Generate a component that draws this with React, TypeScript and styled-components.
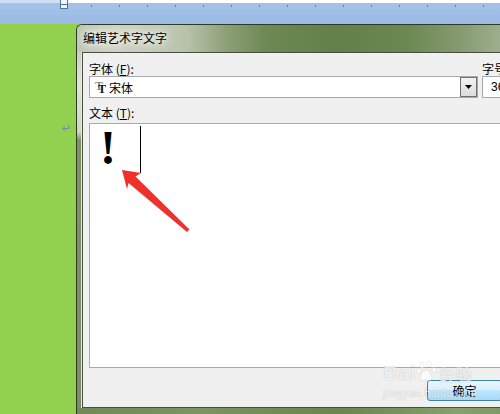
import styled, { createGlobalStyle } from "styled-components";

const GlobalStyle = createGlobalStyle`
  html, body {
    margin: 0;
    padding: 0;
    background: #92d050;
  }
  body {
    font-family: "Noto Sans CJK SC", "Liberation Sans", sans-serif;
    font-size: 12px;
    color: #000;
  }
`;

export default function App() {
  return (
    <Screen>
      <GlobalStyle />
      <Ruler>
        <RulerLeft />
        <IndentMarker />
        <RulerRight />
      </Ruler>
      <RibbonBand />
      <Workspace>
        <PageMargin>
          <ReturnMark>↵</ReturnMark>
        </PageMargin>
        <Dialog>
          <TitleBar>
            <Title>编辑艺术字文字</Title>
          </TitleBar>
          <DialogBody>
            <SideFrame />
            <Content>
              <FieldRow>
                <FieldGroup $width={389}>
                  <Label>
                    字体 (<u>F</u>):
                  </Label>
                  <Combo>
                    <ComboValue>
                      <TrueTypeIcon>
                        <IconBackT>T</IconBackT>
                        <IconFrontT>T</IconFrontT>
                      </TrueTypeIcon>
                      <span>宋体</span>
                    </ComboValue>
                    <DropButton>
                      <svg width="7" height="4" viewBox="0 0 7 4">
                        <path d="M0 0h7L3.5 4z" fill="#000" />
                      </svg>
                    </DropButton>
                  </Combo>
                </FieldGroup>
                <FieldGroup $width={100}>
                  <Label>
                    字号 (<u>S</u>):
                  </Label>
                  <SizeBox>36</SizeBox>
                </FieldGroup>
              </FieldRow>
              <TextLabel>
                文本 (<u>T</u>):
              </TextLabel>
              <TextArea>
                <TextLine>
                  <BigGlyph>!</BigGlyph>
                  <Caret />
                </TextLine>
              </TextArea>
              <Footer>
                <DialogButton $primary>确定</DialogButton>
                <DialogButton>取消</DialogButton>
              </Footer>
            </Content>
          </DialogBody>
          <BottomFrame />
        </Dialog>
      </Workspace>

      <Watermark>
        <WatermarkBrand>
          Bai
          <svg width="22" height="22" viewBox="0 0 22 22">
            <g fill="rgba(255,255,255,0.75)" stroke="rgba(0,0,0,0.12)" strokeWidth="0.6">
              <ellipse cx="6" cy="5" rx="2.3" ry="3" />
              <ellipse cx="13" cy="4" rx="2.3" ry="3" />
              <ellipse cx="2.8" cy="11" rx="2.1" ry="2.7" />
              <ellipse cx="18" cy="10" rx="2.1" ry="2.7" />
              <path d="M10 10c-3 0-6 5-6 8s3 3 6 2c3 1 6 1 6-2s-3-8-6-8z" />
            </g>
          </svg>
          <WatermarkCn>经验</WatermarkCn>
        </WatermarkBrand>
        <WatermarkUrl>jingyan.baidu.com</WatermarkUrl>
      </Watermark>

      <ArrowOverlay width="500" height="414" viewBox="0 0 500 414">
        <polygon
          points="122,170 141,173 135.5,176.5 189.5,229.5 187,232 128.5,183 127,189"
          fill="#f0302a"
        />
      </ArrowOverlay>
    </Screen>
  );
}

const Screen = styled.div`
  position: relative;
  width: 500px;
  height: 414px;
  overflow: hidden;
  background: #92d050;
  display: flex;
  flex-direction: column;
`;

const Ruler = styled.div`
  height: 9px;
  display: flex;
  flex-shrink: 0;
  background: #a4c1e7;
`;

const RulerLeft = styled.div`
  width: 60px;
  background: linear-gradient(#cfdff3 0 3px, #a4c1e7 3px);
`;

const IndentMarker = styled.div`
  width: 8px;
  box-sizing: border-box;
  border: 1px solid #4f74a8;
  border-top: none;
  background: linear-gradient(#f4f7fb 0 4px, #4f74a8 4px 5px, #f4f7fb 5px);
`;

const RulerRight = styled.div`
  flex: 1;
  background:
    linear-gradient(#ffffff 0 3px, transparent 3px),
    repeating-linear-gradient(
      90deg,
      transparent 0 23px,
      #6e7f96 23px 24px,
      transparent 24px 28px
    ) 0 5px / 100% 2px no-repeat,
    #a4c1e7;
`;

const RibbonBand = styled.div`
  height: 15px;
  flex-shrink: 0;
  background: linear-gradient(#a0bfe7, #9cbce5);
`;

const Workspace = styled.div`
  flex: 1;
  display: flex;
  min-height: 0;
`;

const PageMargin = styled.div`
  width: 76px;
  flex-shrink: 0;
  background: #92d050;
  box-sizing: border-box;
  padding: 99px 0 0 62px;
`;

const ReturnMark = styled.div`
  font-family: "DejaVu Sans", sans-serif;
  font-size: 11px;
  line-height: 12px;
  color: #7a8a9c;
`;

const Dialog = styled.div`
  flex-shrink: 0;
  width: 540px;
  display: flex;
  flex-direction: column;
  border-top: 1px solid #2e3a26;
  border-left: 1px solid #2e3a26;
  border-top-left-radius: 6px;
  overflow: hidden;
`;

const TitleBar = styled.div`
  height: 27px;
  flex-shrink: 0;
  display: flex;
  align-items: center;
  padding: 0 0 2px 6px;
  box-sizing: border-box;
  background: linear-gradient(
    90deg,
    #bcc6b0 0px,
    #cdd3c4 40px,
    #b8c2aa 110px,
    #8c9f76 150px,
    #6d8853 190px,
    #63804a 260px,
    #6c8852 330px,
    #84996f 380px,
    #9daf8d 424px,
    #a4b495 540px
  );
`;

const Title = styled.div`
  font-size: 12px;
  line-height: 14px;
  color: #000;
  text-shadow: 0 0 6px #fff, 0 0 10px rgba(255, 255, 255, 0.9),
    0 0 14px rgba(255, 255, 255, 0.7);
`;

const DialogBody = styled.div`
  display: flex;
  flex-shrink: 0;
`;

const SideFrame = styled.div`
  width: 5px;
  flex-shrink: 0;
  border-right: 1px solid #e6eadf;
  box-sizing: border-box;
  background: linear-gradient(
    #c6d0bc 0px,
    #dfe5d8 30px,
    #cdd6c2 80px,
    #7d9262 88px,
    #7b8c68 356px
  );
`;

const Content = styled.div`
  width: 511px;
  height: 356px;
  box-sizing: border-box;
  border: 1px solid #4a4f46;
  border-right: none;
  background: #f0f0f0;
  padding: 9px 0 0 6px;
  display: flex;
  flex-direction: column;
`;

const FieldRow = styled.div`
  display: flex;
  gap: 4px;
`;

const FieldGroup = styled.div<{ $width: number }>`
  width: ${(p) => p.$width}px;
  display: flex;
  flex-direction: column;
`;

const Label = styled.div`
  height: 14px;
  line-height: 14px;
  font-size: 12px;
  white-space: nowrap;
`;

const Combo = styled.div`
  height: 22px;
  box-sizing: border-box;
  border: 1px solid #a7a9ad;
  background: #fff;
  display: flex;
  align-items: stretch;
`;

const ComboValue = styled.div`
  flex: 1;
  display: flex;
  align-items: center;
  gap: 2px;
  padding-left: 5px;
  font-size: 12px;
`;

const TrueTypeIcon = styled.span`
  position: relative;
  display: inline-block;
  width: 12px;
  height: 14px;
  font-family: "Liberation Serif", serif;
  font-weight: bold;
  font-size: 12px;
  line-height: 12px;
`;

const IconBackT = styled.span`
  position: absolute;
  left: 0;
  top: 0;
  color: #8a8a8a;
`;

const IconFrontT = styled.span`
  position: absolute;
  left: 3px;
  top: 3px;
  color: #111;
`;

const DropButton = styled.div`
  width: 17px;
  box-sizing: border-box;
  border: 1px solid #6f6f6f;
  background: linear-gradient(#f3f3f3, #dcdcdc);
  display: flex;
  align-items: center;
  justify-content: center;
`;

const SizeBox = styled.div`
  height: 22px;
  box-sizing: border-box;
  border: 1px solid #a7a9ad;
  background: #fff;
  padding-left: 8px;
  line-height: 20px;
  font-family: "Liberation Sans", sans-serif;
  font-size: 12px;
`;

const TextLabel = styled(Label)`
  margin-top: 8px;
`;

const TextArea = styled.div`
  margin-top: 3px;
  width: 499px;
  height: 245px;
  flex-shrink: 0;
  box-sizing: border-box;
  border: 1px solid #a7a9ad;
  background: #fff;
`;

const TextLine = styled.div`
  display: flex;
  align-items: flex-start;
  margin: 0 0 0 10px;
`;

const BigGlyph = styled.span`
  width: 40px;
  font-family: "Liberation Serif", serif;
  font-weight: bold;
  font-size: 48px;
  line-height: 48px;
  color: #000;
`;

const Caret = styled.span`
  width: 1px;
  height: 47px;
  margin-top: 2px;
  background: #000;
`;

const Footer = styled.div`
  margin-top: 12px;
  padding-right: 10px;
  display: flex;
  justify-content: flex-end;
  gap: 6px;
`;

const DialogButton = styled.div<{ $primary?: boolean }>`
  width: 75px;
  height: 21px;
  box-sizing: border-box;
  border: 1px solid ${(p) => (p.$primary ? "#3c7fb1" : "#707070")};
  border-radius: 3px;
  background: ${(p) =>
    p.$primary
      ? "linear-gradient(#eaf6fd 0%, #d9f0fc 45%, #bee6fd 50%, #a7d9f5 100%)"
      : "linear-gradient(#f2f2f2 0%, #ebebeb 45%, #dddddd 50%, #cfcfcf 100%)"};
  display: flex;
  align-items: center;
  justify-content: center;
  font-size: 12px;
  line-height: 14px;
`;

const BottomFrame = styled.div`
  height: 6px;
  flex-shrink: 0;
  background: linear-gradient(
    90deg,
    #6f8a56 0px,
    #7b9462 120px,
    #6a8550 260px,
    #86a06e 380px,
    #6c8753 540px
  );
`;

const ArrowOverlay = styled.svg`
  position: absolute;
  left: 0;
  top: 0;
  pointer-events: none;
`;

const Watermark = styled.div`
  position: absolute;
  left: 383px;
  top: 360px;
  display: flex;
  flex-direction: column;
  pointer-events: none;
  color: rgba(255, 255, 255, 0.8);
  text-shadow: 0 0 1px rgba(0, 0, 0, 0.28);
`;

const WatermarkBrand = styled.div`
  display: flex;
  align-items: flex-end;
  font-family: "Liberation Sans", sans-serif;
  font-weight: bold;
  font-size: 21px;
  line-height: 26px;
  svg {
    margin: 0 2px 4px 0;
  }
`;

const WatermarkCn = styled.span`
  font-family: "Noto Sans CJK SC", sans-serif;
  font-size: 16px;
  line-height: 24px;
`;

const WatermarkUrl = styled.div`
  font-family: "Liberation Serif", serif;
  font-size: 12px;
  line-height: 14px;
  letter-spacing: 0.3px;
`;
